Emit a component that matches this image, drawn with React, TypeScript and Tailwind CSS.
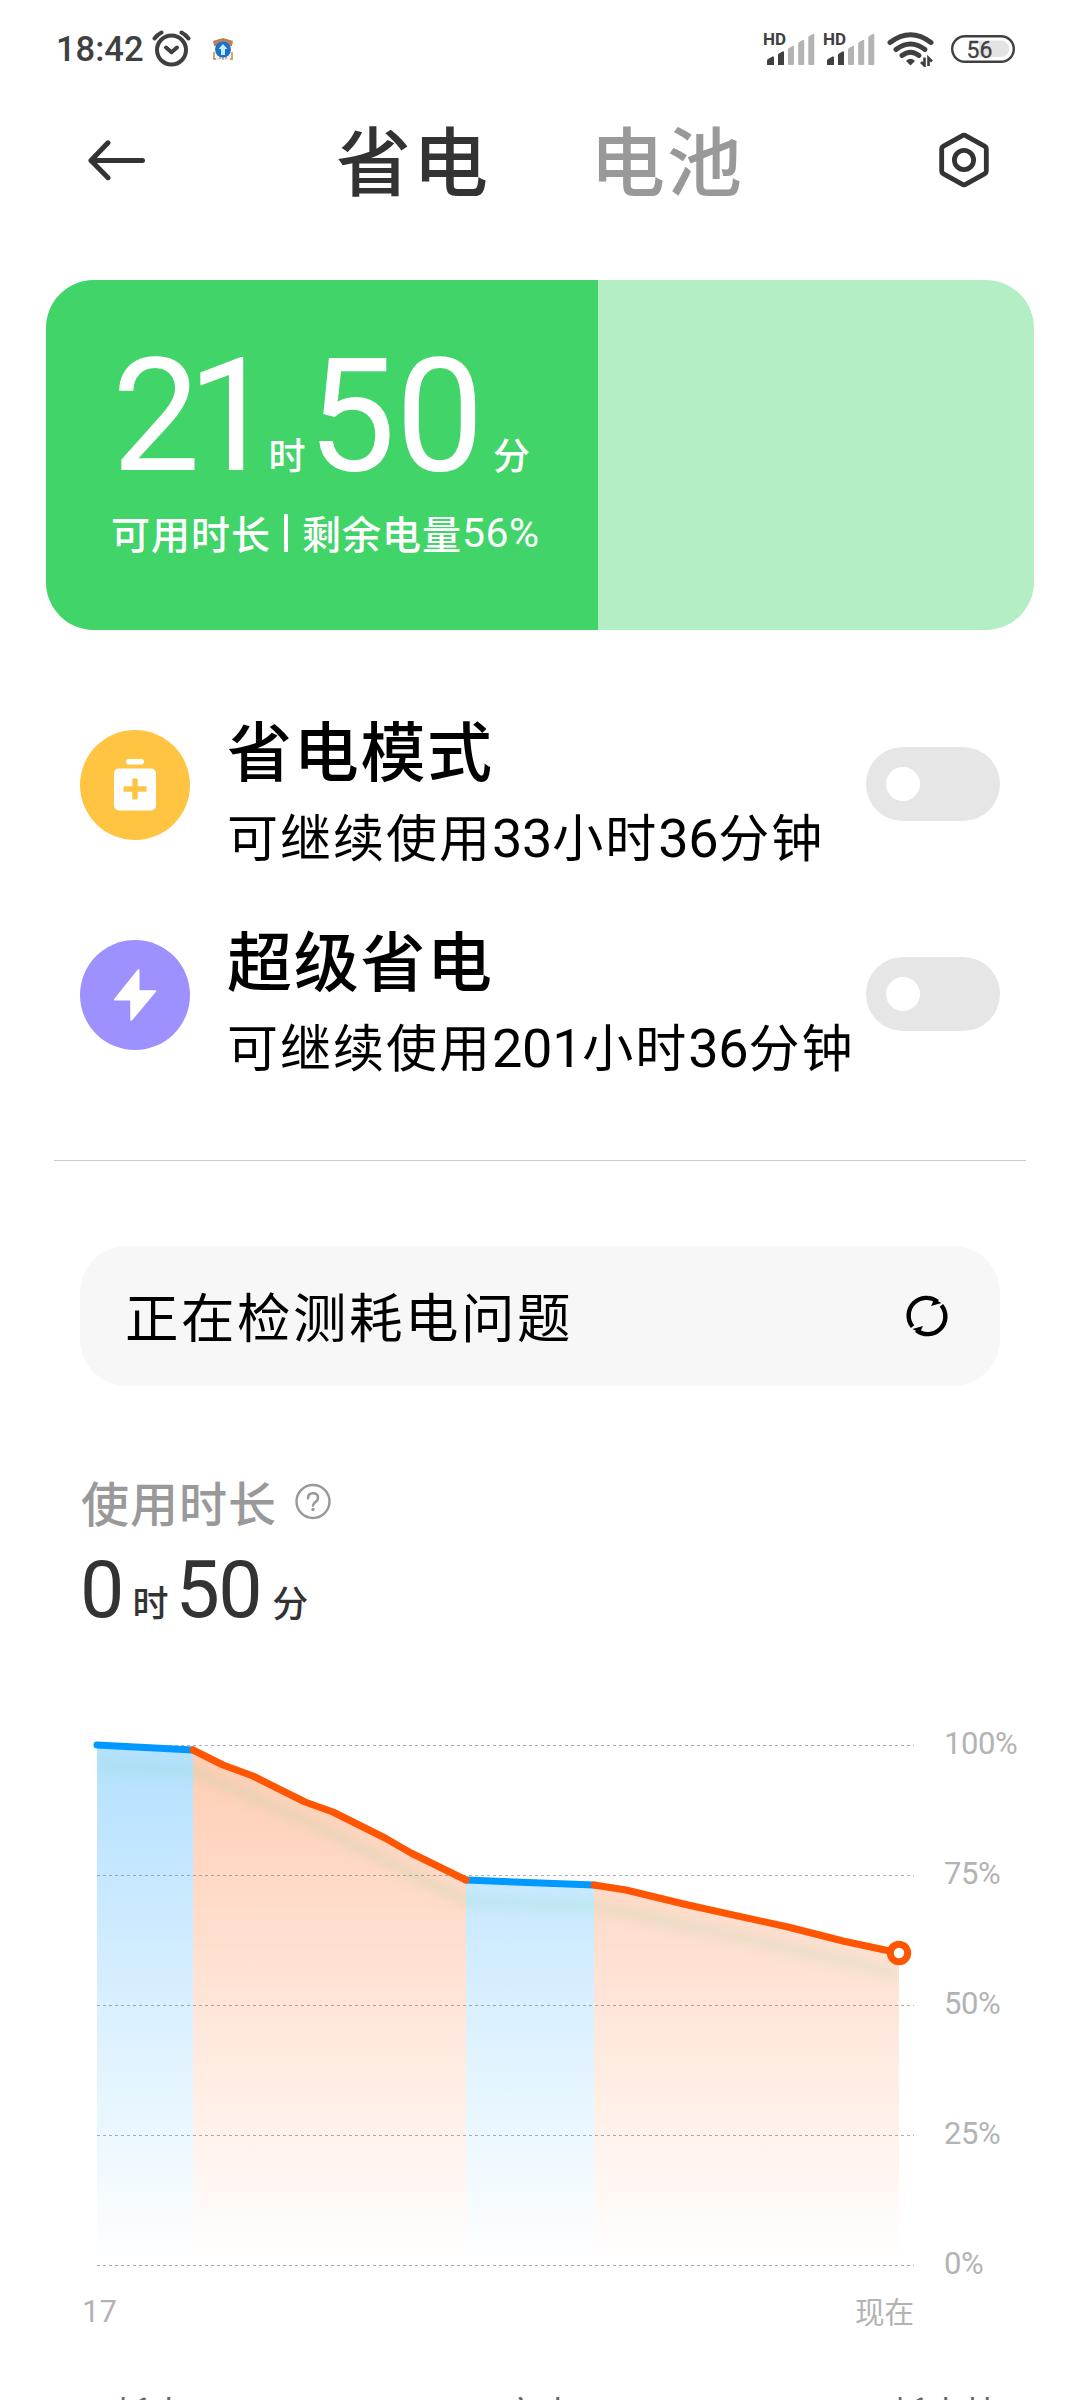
import type { ReactNode } from 'react';

type Point = [number, number];

const modes = [
  { name: '省电模式', note: ['33', '36'], icon: 'battery' },
  { name: '超级省电', note: ['201', '36'], icon: 'bolt' },
];

const axisLabels = ['100%', '75%', '50%', '25%', '0%'];
const gridLines = [45.5, 175.5, 305.5, 435.5, 565.5];

const segments: { color: string; fill: string; points: Point[] }[] = [
  { color: '#0099ff', fill: 'url(#fade-blue)', points: [[97, 45], [193, 50]] },
  { color: '#0099ff', fill: 'url(#fade-blue)', points: [[466, 180], [594, 185]] },
  {
    color: '#ff5500',
    fill: 'url(#fade-orange)',
    points: [[193, 50], [223, 65], [253, 76], [305, 102], [333, 112], [385, 138], [411, 153], [466, 180]],
  },
  {
    color: '#ff5500',
    fill: 'url(#fade-orange)',
    points: [[594, 185], [626, 190], [688, 205], [788, 227], [843, 241], [899, 253]],
  },
];

const toLine = (points: Point[]) => points.map((p) => p.join(',')).join(' ');

const Digits = ({ children }: { children: ReactNode }) => (
  <span className="font-['Roboto',sans-serif] text-[1.06em] font-normal leading-none tracking-[-0.300px]">
    {children}
  </span>
);

const Signal = () => (
  <svg className="overflow-visible" width="52" height="34" viewBox="0 0 52 34">
    <text x="-2" y="13" fontSize="17" fontWeight="700" fontFamily="Roboto, sans-serif" fill="#404040">
      HD
    </text>
    <path d="M2 32.500v-4q0-1 1-1.600l4.500-2.400q1.500-.5 1.500 1v7q0 .5-.5.5h-6q-.5 0-.5-.5z" fill="#404040" />
    <path d="M13 32.500v-9.500q0-1 1-1.600l3.500-2q1.500-.5 1.500 1v12q0 .6-.6.6h-4.800q-.6 0-.6-.6z" fill="#404040" />
    <g fill="#b3b3b3">
      <path d="M23 32v-14.500q0-1 1-1.600l3.500-2q1.500-.5 1.500 1v17q0 1-1 1h-4q-1 0-1-1z" />
      <path d="M33.200 32v-20.500q0-1 1-1.600l3.500-2q1.500-.5 1.500 1v23q0 1-1 1h-4q-1 0-1-1z" />
      <path d="M43.300 32v-26.500q0-1 1-1.600l3.500-2q1.500-.5 1.500 1v29q0 1-1 1h-4q-1 0-1-1z" />
    </g>
  </svg>
);

const StatusBar = () => (
  <div className="flex h-[98px] items-center pr-[65px] pl-[56px] text-[#404040]">
    <span className="w-[96px] font-['Roboto',sans-serif] text-[34.500px] font-medium leading-none">18:42</span>
    <svg width="40" height="38" viewBox="0 0 40 38" fill="none" stroke="#404040" strokeWidth="4">
      <circle cx="19.500" cy="20" r="14.500" />
      <path d="M14 17.500l5.500 4.800 5.500-4.800" strokeLinecap="round" strokeLinejoin="round" />
      <path d="M2.500 8.500q3-4 7-6M36.500 8.500q-3-4-7-6" strokeLinecap="round" />
    </svg>
    <svg className="ml-5" width="22" height="23" viewBox="0 0 22 23">
      <path d="M1 3l3-1 7-2 7 2 3 1-1 5H2z" fill="#b98256" />
      <path d="M2 14v7M20 14v7M1 21h3M18 21h3" stroke="#c08a52" strokeWidth="1.500" />
      <path d="M4 17h14v5H4z" fill="#f1eeee" />
      <path d="M8 18v3M11 19v3M14 18v3" stroke="#8a7360" />
      <circle cx="11" cy="11.500" r="8" fill="#1f6fc9" />
      <path d="M11 6l4.500 5H13v6H9v-6H6.500z" fill="#b9f1ff" />
    </svg>
    <div className="ml-auto flex items-center">
      <Signal />
      <span className="ml-2">
        <Signal />
      </span>
      <svg className="ml-[10px]" width="48" height="36" viewBox="0 0 48 36" fill="none" stroke="#404040">
        <path d="M3 11.500q20.500-15.500 41 0" strokeWidth="5" strokeLinecap="round" />
        <path d="M9 18.500q14.500-11 29 0" strokeWidth="5" strokeLinecap="round" />
        <path d="M15 24.500q8.500-6.500 17 0" strokeWidth="5" strokeLinecap="round" />
        <path d="M23.500 34.500l-4.500-4.500q4.500-4.500 9 0z" fill="#404040" stroke="none" />
        <path d="M37.500 26.500v8l-3.500-3.500M41.500 35v-8l3.500 3.500" strokeWidth="2.600" />
      </svg>
      <svg className="ml-[16px]" width="64" height="28" viewBox="0 0 64 28">
        <rect x="1.200" y="1.200" width="61.600" height="25.600" rx="12.800" fill="none" stroke="#404040" strokeWidth="2.400" />
        <path d="M28 5.500h22a8.300 8.300 0 0 1 0 16.600H28z" fill="#e3e3e3" />
        <text x="15.500" y="22.500" fontSize="23" fontFamily="Roboto, sans-serif" fill="#404040" stroke="#404040" strokeWidth="0.300">
          56
        </text>
      </svg>
    </div>
  </div>
);

const Header = () => (
  <div className="flex h-[124px] items-center pr-[90px] pl-[87px]">
    <svg width="60" height="42" viewBox="0 0 60 42" fill="none" stroke="#333" strokeWidth="5" strokeLinecap="round" strokeLinejoin="round">
      <path d="M55.500 21.500H4M21 3.800L4 21.500l17 17.200" />
    </svg>
    <div className="mb-1 ml-[189px] flex gap-[100px] text-[75px] font-medium leading-[120px] tracking-[2px]">
      <span className="w-[154px] whitespace-nowrap text-[#333]">省电</span>
      <span className="w-[154px] whitespace-nowrap text-[#999]">电池</span>
    </div>
    <svg className="ml-auto" width="52" height="56" viewBox="0 0 52 56" fill="none" stroke="#333" strokeWidth="4.800" strokeLinejoin="round">
      <path d="M26 3.200q1 0 2 .6l18.500 10.400q1.800 1 1.800 3v21.600q0 2-1.800 3L28 52.200q-2 1.200-4 0L5.500 41.800q-1.800-1-1.800-3V17.200q0-2 1.800-3L24 3.800q1-.6 2-.6z" />
      <circle cx="26" cy="28" r="9.600" />
    </svg>
  </div>
);

const BatteryCard = () => (
  <section className="mx-[46px] mt-[58px] h-[350px] overflow-hidden rounded-[48px] bg-[#b3eec5] text-white">
    <div className="h-full w-[552px] bg-[#41d469] pt-[58px] pl-[66px]">
      <div className="flex h-[157px] items-baseline whitespace-nowrap font-['Roboto','Noto_Sans_CJK_SC',sans-serif] leading-none">
        <span className="text-[157px] leading-none tracking-[-13px]">21</span>
        <span className="ml-[6px] text-[37px] font-medium leading-none">时</span>
        <span className="ml-[2px] text-[157px] leading-none">50</span>
        <span className="ml-[9px] text-[37px] font-medium leading-none">分</span>
      </div>
      <div className="-ml-px mt-[6px] flex items-center whitespace-nowrap text-[39px] font-medium leading-[60px] tracking-[1px]">
        <span>可用时长</span>
        <span className="mt-[2px] mr-[14px] ml-[13px] h-[38px] w-1 bg-white" />
        <span>剩余电量</span>
        <span className="mt-[2px] font-['Roboto',sans-serif] text-[41px] font-normal tracking-[0.500px]">56%</span>
      </div>
    </div>
  </section>
);

const ModeIcon = ({ icon }: { icon: string }) =>
  icon === 'battery' ? (
    <svg width="110" height="110" viewBox="0 0 110 110">
      <circle cx="55" cy="55" r="55" fill="#ffc542" />
      <rect x="46" y="29" width="18" height="5.500" rx="2.700" fill="#fff" />
      <rect x="34" y="38.500" width="42" height="42" rx="5" fill="#fff" />
      <path d="M43.500 59h23M55 48.500v21" stroke="#ffc542" strokeWidth="5.400" />
    </svg>
  ) : (
    <svg width="110" height="110" viewBox="0 0 110 110">
      <circle cx="55" cy="55" r="55" fill="#9d91ff" />
      <path
        d="M58.500 30.200L35 59.600H51.200V79.800L75.200 51.200H58.500z"
        fill="#fff"
        stroke="#fff"
        strokeWidth="2"
        strokeLinejoin="round"
      />
    </svg>
  );

const ModeRow = ({ name, note, icon }: { name: string; note: string[]; icon: string }) => (
  <div className="flex h-[210px] items-center">
    <ModeIcon icon={icon} />
    <div className="ml-[37px] whitespace-nowrap pt-[13px]">
      <div className="h-[87px] text-[65px] font-medium leading-[87px] tracking-[1.700px]">{name}</div>
      <div className="h-[87px] text-[51px] leading-[87px] tracking-[2px]">
        可继续使用<Digits>{note[0]}</Digits>小时<Digits>{note[1]}</Digits>分钟
      </div>
    </div>
    <div className="mb-[2px] ml-auto flex h-[74px] w-[134px] items-center rounded-full bg-[#e6e6e6] pl-5">
      <span className="size-[34px] rounded-full bg-white" />
    </div>
  </div>
);

const Checking = () => (
  <section className="mx-20 mt-[85px] flex h-[140px] items-center justify-between rounded-[47px] bg-[#f7f7f7] pr-[51px] pl-[45px]">
    <span className="mb-[3px] text-[53.500px] leading-[80px] tracking-[2.500px]">正在检测耗电问题</span>
    <svg width="44" height="44" viewBox="0 0 44 44" fill="none" stroke="#000" strokeWidth="4.400">
      <path d="M7.600 32.700A17.700 17.700 0 0 1 32.500 7.800" />
      <path d="M36.400 11.300A17.700 17.700 0 0 1 11.500 36.200" />
      <path d="M28 4.500l8.500 4.500-10.500 3 2-4z" fill="#000" stroke="none" />
      <path d="M16 39.500l-8.500-4.500 10.500-3-2 4z" fill="#000" stroke="none" />
    </svg>
  </section>
);

const Usage = () => (
  <section className="mt-[85px] pl-20">
    <div className="flex h-[60px] items-center text-[#999]">
      <span className="ml-px text-[48px] font-medium leading-[60px] tracking-[1px]">使用时长</span>
      <svg className="ml-[17px]" width="38" height="38" viewBox="0 0 38 38" fill="none" stroke="#999" strokeWidth="2.400">
        <circle cx="19" cy="19.500" r="16.500" />
        <path d="M14 16.300q0-5 5-5t5 4.600q0 2-2.500 4t-2.500 3.600" strokeWidth="2.600" strokeLinecap="round" />
        <circle cx="19" cy="27.500" r="1.700" fill="#999" stroke="none" />
      </svg>
    </div>
    <div className="mt-5 flex h-[79px] items-baseline font-['Roboto','Noto_Sans_CJK_SC',sans-serif] leading-none text-[#333]">
      <span className="text-[79px] leading-none">0</span>
      <span className="ml-[8px] text-[36px] font-medium leading-none">时</span>
      <span className="ml-[7px] text-[79px] leading-none tracking-[-1.500px]">50</span>
      <span className="ml-[11px] text-[36px] font-medium leading-none">分</span>
    </div>
  </section>
);

const Chart = () => (
  <section className="mt-[70px] text-[#b3b3b3]">
    <div className="flex h-[590px]">
      <svg width="944" height="590" viewBox="0 0 944 590" fill="none">
        <defs>
          <linearGradient id="fade-blue" gradientUnits="userSpaceOnUse" x1="0" y1="45" x2="0" y2="565">
            <stop offset="0" stopColor="#0099ff" stopOpacity="0.3" />
            <stop offset="1" stopColor="#0099ff" stopOpacity="0" />
          </linearGradient>
          <linearGradient id="fade-orange" gradientUnits="userSpaceOnUse" x1="0" y1="45" x2="0" y2="565">
            <stop offset="0" stopColor="#ff5500" stopOpacity="0.3" />
            <stop offset="1" stopColor="#ff5500" stopOpacity="0" />
          </linearGradient>
          <filter id="soft" filterUnits="userSpaceOnUse" x="60" y="20" width="860" height="300">
            <feGaussianBlur stdDeviation="6" />
          </filter>
          <clipPath id="plot">
            <rect x="90" y="0" width="809" height="590" />
          </clipPath>
        </defs>
        {segments.map(({ fill, points }) => (
          <polygon
            key={points[0][0]}
            fill={fill}
            points={`${toLine(points)} ${points[points.length - 1][0]},565 ${points[0][0]},565`}
          />
        ))}
        <g clipPath="url(#plot)">
          <polyline
            points="97,66 193,71 253,98 333,134 411,174 466,201 594,206 688,226 788,248 899,274"
            stroke="#6fcf90"
            strokeOpacity="0.170"
            strokeWidth="10"
            filter="url(#soft)"
          />
        </g>
        {gridLines.map((y) => (
          <path key={y} d={`M97 ${y}H914`} stroke="#777" strokeOpacity="0.600" strokeDasharray="3 3" />
        ))}
        {segments.map(({ color, points }) => (
          <polyline
            key={points[0][0]}
            points={toLine(points)}
            stroke={color}
            strokeWidth="7"
            strokeLinecap="round"
            strokeLinejoin="round"
          />
        ))}
        <circle cx="899" cy="253" r="8.700" fill="#fff" stroke="#ff5500" strokeWidth="7" />
      </svg>
      <div className="flex h-[584px] flex-col justify-between pt-[24px] font-['Roboto',sans-serif] text-[31px] leading-10 tracking-[-0.400px]">
        {axisLabels.map((label) => (
          <span key={label}>{label}</span>
        ))}
      </div>
    </div>
    <div className="flex h-11 justify-between pr-[166px] pl-[82px] text-[29.500px] leading-[40px]">
      <span className="pt-[2px] font-['Roboto',sans-serif] text-[31px]">17</span>
      <span>现在</span>
    </div>
  </section>
);

const Legend = () => (
  <div className="mt-14 flex whitespace-nowrap pl-[114px] text-[36px] leading-[44px] tracking-[1px] text-[#666]">
    <span className="w-[389px]">耗电</span>
    <span className="w-[388px]">充电</span>
    <span>耗电快</span>
  </div>
);

const App = () => (
  <div className="h-[2400px] w-[1080px] overflow-hidden bg-white font-['Noto_Sans_CJK_SC',sans-serif] text-black">
    <StatusBar />
    <Header />
    <BatteryCard />
    <section className="mt-[50px] pr-20 pl-20">
      {modes.map((mode) => (
        <ModeRow key={mode.name} {...mode} />
      ))}
    </section>
    <div className="mx-[54px] mt-[60px] h-px bg-[#ccc]" />
    <Checking />
    <Usage />
    <Chart />
    <Legend />
  </div>
);

export default App;
